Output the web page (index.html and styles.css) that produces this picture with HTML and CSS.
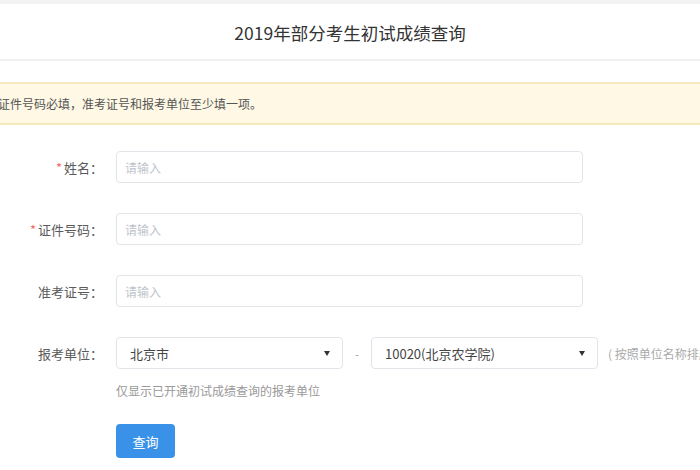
FILE: index.html
```html
<!DOCTYPE html>
<html lang="zh">
<head>
<meta charset="utf-8">
<title>2019年部分考生初试成绩查询</title>
<link rel="stylesheet" href="styles.css">
</head>
<body>
<div class="topband"></div>
<header class="header">2019年部分考生初试成绩查询</header>
<div class="alert"><span class="alert-text">姓名、证件号码必填，准考证号和报考单位至少填一项。</span></div>
<form class="form">
  <div class="row">
    <label class="label"><span class="req">*</span>姓名：</label>
    <div class="input"><span class="ph">请输入</span></div>
  </div>
  <div class="row">
    <label class="label"><span class="req">*</span>证件号码：</label>
    <div class="input"><span class="ph">请输入</span></div>
  </div>
  <div class="row">
    <label class="label">准考证号：</label>
    <div class="input"><span class="ph">请输入</span></div>
  </div>
  <div class="row row-select">
    <label class="label">报考单位：</label>
    <div class="selects">
      <div class="select"><span>北京市</span><span class="arrow"></span></div>
      <span class="dash">-</span>
      <div class="select"><span>10020(北京农学院)</span><span class="arrow"></span></div>
      <span class="note">( 按照单位名称排序 )</span>
    </div>
  </div>
  <div class="hint">仅显示已开通初试成绩查询的报考单位</div>
  <div class="actions"><button type="button" class="btn">查询</button></div>
</form>
</body>
</html>
```
FILE: styles.css
```css
html, body {
  margin: 0;
  padding: 0;
  background: #fff;
  overflow: hidden;
}
body {
  width: 700px;
  height: 470px;
  font-family: "Noto Sans CJK SC", "Liberation Sans", sans-serif;
  color: #333;
}
.topband {
  height: 4px;
  background: #f3f3f3;
}
.header {
  height: 57px;
  line-height: 57px;
  text-align: center;
  font-size: 17.5px;
  color: #333;
  border-bottom: 2px solid #f1f1f1;
  box-sizing: border-box;
}
.alert {
  margin-top: 21px;
  height: 43px;
  box-sizing: border-box;
  background: #fef8e5;
  border-top: 2px solid #f7e8bd;
  border-bottom: 2px solid #f7e8bd;
  display: flex;
  align-items: center;
  white-space: nowrap;
}
.alert-text {
  margin-left: -38px;
  font-size: 12px;
  color: #555;
}
.form {
  margin-top: 26px;
}
.row {
  display: flex;
  align-items: center;
  height: 32px;
  margin-bottom: 30px;
}
.label {
  width: 103px;
  flex: none;
  text-align: right;
  font-size: 13px;
  color: #5a5a5a;
  margin-right: 13px;
}
.req {
  color: #f56c6c;
  margin-right: 2px;
}
.input {
  width: 467px;
  height: 32px;
  box-sizing: border-box;
  border: 1px solid #e2e4ea;
  border-radius: 4px;
  display: flex;
  align-items: center;
  padding-left: 8px;
}
.ph {
  font-size: 12px;
  color: #c0c4cc;
}
.row-select {
  margin-bottom: 7px;
}
.selects {
  display: flex;
  align-items: center;
  white-space: nowrap;
}
.select {
  width: 227px;
  height: 32px;
  box-sizing: border-box;
  border: 1px solid #e2e4ea;
  border-radius: 4px;
  display: flex;
  align-items: center;
  justify-content: space-between;
  padding: 0 12px 0 13px;
  font-size: 13px;
  color: #444;
}
.arrow {
  width: 0;
  height: 0;
  border-left: 3px solid transparent;
  border-right: 3px solid transparent;
  border-top: 5px solid #333;
}
.dash {
  width: 28px;
  text-align: center;
  color: #aaa;
  font-size: 12px;
}
.note {
  margin-left: 10px;
  font-size: 12px;
  color: #aaa;
}
.hint {
  margin-left: 116px;
  font-size: 12px;
  color: #999;
  height: 30px;
  line-height: 30px;
}
.actions {
  margin-left: 116px;
  margin-top: 18px;
}
.btn {
  width: 59px;
  height: 34px;
  border: none;
  border-radius: 4px;
  background: #3a92e8;
  color: #fff;
  font-family: inherit;
  font-size: 13px;
  padding: 0;
}
```
